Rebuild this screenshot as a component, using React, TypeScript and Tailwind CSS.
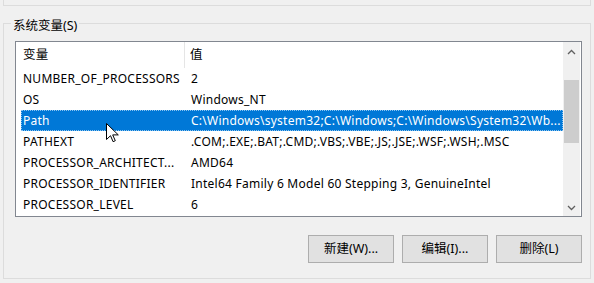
import React from 'react';

const rows: [string, string][] = [
  ['NUMBER_OF_PROCESSORS', '2'],
  ['OS', 'Windows_NT'],
  ['Path', 'C:\\Windows\\system32;C:\\Windows;C:\\Windows\\System32\\Wb...'],
  ['PATHEXT', '.COM;.EXE;.BAT;.CMD;.VBS;.VBE;.JS;.JSE;.WSF;.WSH;.MSC'],
  ['PROCESSOR_ARCHITECT...', 'AMD64'],
  ['PROCESSOR_IDENTIFIER', 'Intel64 Family 6 Model 60 Stepping 3, GenuineIntel'],
  ['PROCESSOR_LEVEL', '6'],
];

const Chevron: React.FC<{ down?: boolean }> = ({ down }) => (
  <svg width="9" height="6" viewBox="0 0 9 6" className="text-[#606060]">
    <path d={down ? 'M1 1l3.5 3.5L8 1' : 'M1 5l3.5-3.5L8 5'} fill="none" stroke="currentColor" strokeWidth="1.3" />
  </svg>
);

const Button: React.FC<{ label: string }> = ({ label }) => (
  <button className="w-[86px] h-[28px] bg-[#e1e1e1] border border-[#adadad] text-[12.5px] text-[#000]">
    {label}
  </button>
);

const App: React.FC = () => {
  return (
    <div
      className="relative w-[594px] h-[283px] overflow-hidden bg-[#f0f0f0] text-[12px] text-black"
      style={{ fontFamily: '"Noto Sans", "Noto Sans CJK SC", sans-serif' }}
    >
      {/* bottom edge of the group above */}
      <div className="mx-[3px] h-[6px] border-x border-b border-[#dcdcdc]" />

      {/* 系统变量 group */}
      <div className="relative mx-[3px] mt-[17px] h-[256px] border border-[#dcdcdc] pl-[11px] pt-[17px]">
        <span className="absolute -top-[6px] left-[7px] bg-[#f0f0f0] px-[2px] leading-[16px] text-[12.5px]">系统变量(S)</span>

        <div className="flex w-[567px] h-[176px] border border-[#828790] bg-white">
          <div className="flex-1 overflow-hidden tracking-[0.25px]">
            <div className="flex h-[26px] items-center text-[12.5px]">
              <div className="w-[169px] h-full flex items-center pl-[7px] border-r border-[#e5e5e5]">变量</div>
              <div className="pl-[5px]">值</div>
            </div>
            {rows.map(([name, value]) => {
              const sel = name === 'Path';
              return (
                <div
                  key={name}
                  className={`ml-[5px] flex h-[21px] items-center whitespace-nowrap ${
                    sel ? 'bg-[#0078d7] text-white border border-dotted border-[#8cc4f0]' : 'border border-transparent'
                  }`}
                >
                  <div className="w-[164px] shrink-0 pl-[1px]">{name}</div>
                  <div className="pl-[5px]">{value}</div>
                </div>
              );
            })}
          </div>

          {/* scrollbar */}
          <div className="w-[17px] mr-[1px] flex flex-col items-center bg-[#f0f0f0]">
            <div className="h-[17px] w-full flex items-center justify-center mt-[1px]">
              <Chevron />
            </div>
            <div className="mt-[20px] w-[15px] h-[63px] bg-[#cdcdcd]" />
            <div className="flex-1" />
            <div className="h-[17px] w-full flex items-center justify-center">
              <Chevron down />
            </div>
          </div>
        </div>

        <div className="mt-[18px] flex w-[567px] justify-end gap-[8px]">
          <Button label="新建(W)..." />
          <Button label="编辑(I)..." />
          <Button label="删除(L)" />
        </div>
      </div>

      {/* mouse pointer */}
      <svg className="absolute left-[106px] top-[123px]" width="13" height="20" viewBox="0 0 13 20">
        <path d="M0.5 0.5v16l4-3.8 2.6 6 2.2-1-2.6-5.8h5.6z" fill="#fff" stroke="#000" strokeWidth="1" />
      </svg>
    </div>
  );
};

export default App;
